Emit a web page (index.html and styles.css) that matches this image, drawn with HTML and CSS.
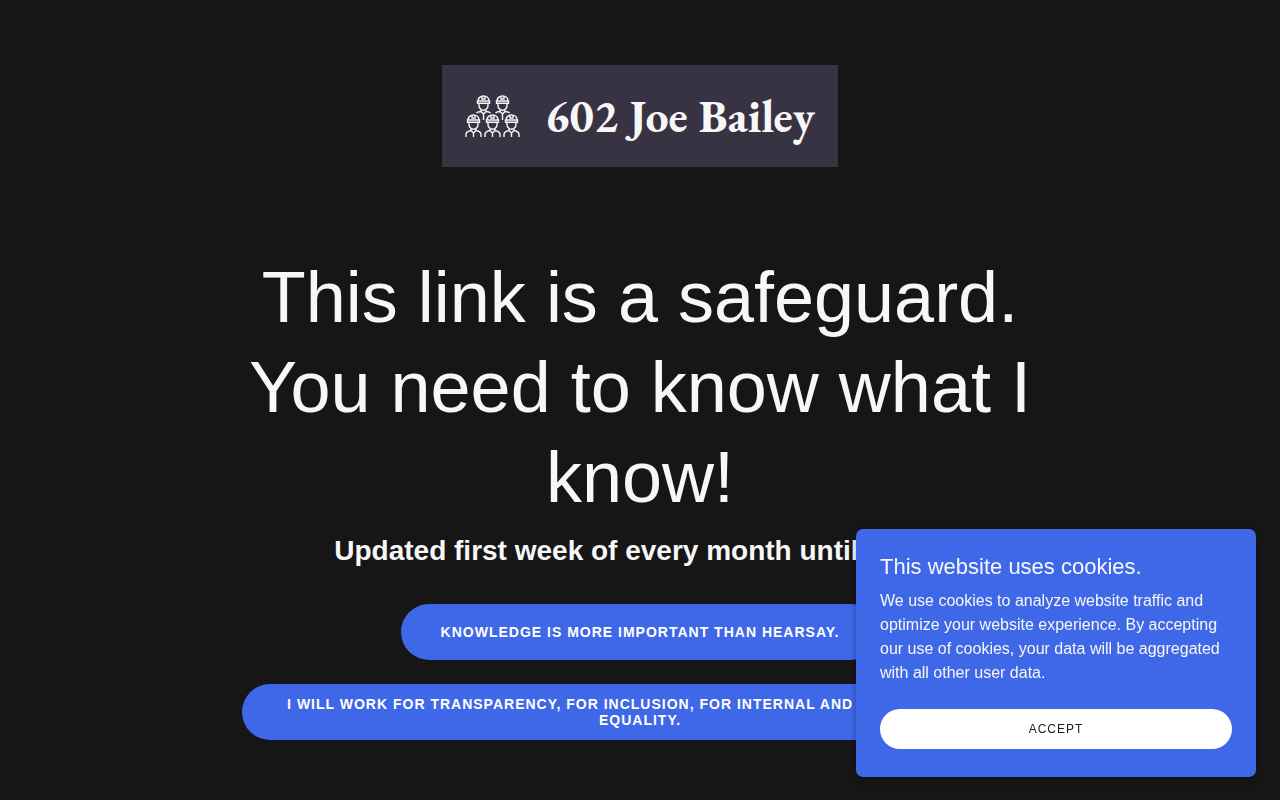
FILE: index.html
```html
<!DOCTYPE html>
<html lang="en">
<head>
    <meta charset="UTF-8" />
    <meta name="viewport" content="width=device-width, initial-scale=1.0"/>
    <title>602 Joe Bailey</title>
    <link rel="stylesheet" href="styles.css">
</head>
<body>
    <header class="header">
        <a class="logo" href="#">
            <svg class="logo-icon" viewBox="0 0 56 42" aria-hidden="true">
                <defs>
                    <g id="head">
                        <path d="M3 6 C3 3 5.5 1 8.500 1 C11.500 1 14 3 14 6"/>
                        <path d="M7 1.5 V4 H10 V1.5"/>
                        <path d="M2.500 6 H14.500 V8.200 H2.500 Z"/>
                        <path d="M4 8.500 V10.500 C4 13 6 15.200 8.500 15.200 C11 15.200 13 13 13 10.500 V8.500"/>
                    </g>
                    <g id="worker">
                        <use href="#head"/>
                        <path d="M6 14.500 V16.500 L8.500 19 L11 16.500 V14.500 M8.500 19 V23"/>
                        <path d="M6 16.500 C3 17 1 18 1 20.500 V23 M11 16.500 C14 17 16 18 16 20.500 V23"/>
                    </g>
                </defs>
                <use href="#head" x="10" y="0"/>
                <use href="#head" x="29" y="0"/>
                <path d="M11.500 18 C12.500 17 14 16.500 16 16.500 L18.500 19 L21 16.500 C23 16.500 24.500 17 25.500 18 M16 14.500 V16.500 M21 14.500 V16.500 M18.500 19 V25"/>
                <path d="M30.500 18 C31.500 17 33 16.500 35 16.500 L37.500 19 L40 16.500 C42 16.500 43.500 17 44.500 18 M35 14.500 V16.500 M40 14.500 V16.500 M37.500 19 V25"/>
                <use href="#worker" x="0" y="19"/>
                <use href="#worker" x="19" y="19"/>
                <use href="#worker" x="38" y="19"/>
            </svg>
            <span class="logo-text">602 Joe Bailey</span>
        </a>
    </header>

    <main class="content">
        <h1>This link is a safeguard. You need to know what I know!</h1>
        <h2>Updated first week of every month until July 1</h2>
        <div class="actions">
            <a class="btn" href="#">Knowledge is more important than hearsay.</a>
            <a class="btn" href="#">I will work for transparency, for inclusion, for internal and external wage equality.</a>
        </div>
    </main>

    <section class="cookie" aria-labelledby="cookie-title">
        <h3 id="cookie-title">This website uses cookies.</h3>
        <p>We use cookies to analyze website traffic and optimize your website experience. By accepting our use of cookies, your data will be aggregated with all other user data.</p>
        <button type="button">Accept</button>
    </section>
</body>
</html>
```
FILE: styles.css
```css
* {
    box-sizing: border-box;
}
body {
    font-family: "Liberation Sans", Arial, sans-serif;
    background: #161616;
    color: #f7f7f7;
    margin: 0;
}
.header {
    display: flex;
    justify-content: center;
    padding: 65px 24px 0;
}
.logo {
    display: flex;
    align-items: center;
    gap: 24px;
    padding: 25px 23px;
    background: #373343;
    color: #f7f7f7;
    text-decoration: none;
}
.logo-icon {
    width: 56px;
    height: 42px;
    fill: none;
    stroke: #f7f7f7;
    stroke-width: 1.4;
}
.logo-text {
    font-family: "EB Garamond", "Liberation Serif", serif;
    font-size: 46px;
    font-weight: 700;
    line-height: 52px;
}
.content {
    max-width: 844px;
    margin: 0 auto;
    padding: 85px 24px 60px;
    text-align: center;
}
h1 {
    margin: 0;
    font-size: 72px;
    font-weight: 400;
    line-height: 90px;
}
h2 {
    margin: 8px 0 32px;
    font-size: 28px;
    font-weight: 700;
    line-height: 42px;
}
.actions {
    display: flex;
    flex-direction: column;
    align-items: center;
    gap: 24px;
}
.btn {
    display: flex;
    align-items: center;
    min-height: 56px;
    padding: 4px 40px;
    border-radius: 48px;
    background: #3f68e8;
    color: #fff;
    font-size: 14px;
    font-weight: 700;
    line-height: 16px;
    letter-spacing: 1px;
    text-decoration: none;
    text-transform: uppercase;
}
.cookie {
    position: fixed;
    right: 24px;
    bottom: 23px;
    width: 400px;
    max-width: calc(100% - 48px);
    padding: 24px 24px 28px;
    border-radius: 7px;
    background: #3f68e8;
    box-shadow: 0 2px 6px rgba(0,0,0,0.3);
}
.cookie h3 {
    margin: 0 0 8px;
    font-size: 22px;
    font-weight: 400;
    line-height: 28px;
}
.cookie p {
    margin: 0 0 24px;
    font-size: 16px;
    line-height: 24px;
}
.cookie button {
    width: 100%;
    height: 40px;
    border: none;
    border-radius: 48px;
    background: #fff;
    color: #1c1c1c;
    font-family: inherit;
    font-size: 12px;
    letter-spacing: 1px;
    text-transform: uppercase;
    cursor: pointer;
}
```
